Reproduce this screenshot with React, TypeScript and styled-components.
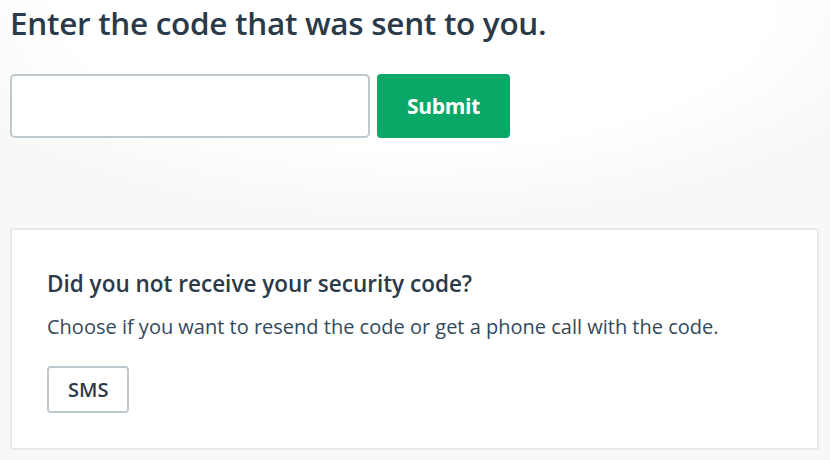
import * as React from "react";
import styled, { createGlobalStyle } from "styled-components";

const GlobalStyle = createGlobalStyle`
  html, body {
    margin: 0;
    padding: 0;
  }
  body {
    font-family: "Open Sans", "Noto Sans", "Liberation Sans", sans-serif;
    color: #2b3a48;
  }
`;

const Page = styled.div`
  min-height: 460px;
  padding: 3px 11px 10px 10px;
  box-sizing: border-box;
  background:
    radial-gradient(ellipse 62% 215px at 50% 0, #ffffff 68%, #f8f8f8 100%),
    #f8f8f8;
`;

const Title = styled.h1`
  margin: 0;
  font-size: 31.5px;
  font-weight: 600;
  letter-spacing: -0.3px;
  line-height: 40px;
`;

const CodeForm = styled.form`
  display: flex;
  gap: 7px;
  margin-top: 31px;
`;

const CodeInput = styled.input`
  width: 360px;
  height: 64px;
  box-sizing: border-box;
  border: 2px solid #bfc8cd;
  border-radius: 5px;
  background: #fff;
  font-size: 20px;
  padding: 0 14px;
  font-family: inherit;
  outline: none;
`;

const SubmitButton = styled.button`
  width: 133px;
  height: 64px;
  border: none;
  border-radius: 4px;
  background: #0aa866;
  color: #fff;
  font-family: inherit;
  font-size: 21px;
  font-weight: 700;
  letter-spacing: -0.3px;
  cursor: pointer;
`;

const HelpCard = styled.section`
  margin-top: 90px;
  background: #fff;
  border: 2px solid #e9e9e9;
  border-radius: 3px;
  padding: 39px 35px 35px;
`;

const CardTitle = styled.h2`
  margin: 0;
  font-size: 22.5px;
  font-weight: 600;
  line-height: 30px;
`;

const CardText = styled.p`
  margin: 14px 0 0;
  font-size: 20px;
  line-height: 28px;
  color: #34495a;
`;

const OptionRow = styled.div`
  display: flex;
  gap: 10px;
  margin-top: 25px;
`;

const OptionButton = styled.button`
  height: 47px;
  padding: 0 19px;
  border: 2px solid #bfc8cd;
  border-radius: 4px;
  background: #fff;
  color: #2b3a48;
  font-family: inherit;
  font-size: 20px;
  font-weight: 600;
  cursor: pointer;
`;

export default function App() {
  const [code, setCode] = React.useState("");

  return (
    <Page>
      <GlobalStyle />
      <Title>Enter the code that was sent to you.</Title>
      <CodeForm onSubmit={e => e.preventDefault()}>
        <CodeInput value={code} onChange={e => setCode(e.target.value)} />
        <SubmitButton type="submit">Submit</SubmitButton>
      </CodeForm>
      <HelpCard>
        <CardTitle>Did you not receive your security code?</CardTitle>
        <CardText>Choose if you want to resend the code or get a phone call with the code.</CardText>
        <OptionRow>
          <OptionButton type="button">SMS</OptionButton>
        </OptionRow>
      </HelpCard>
    </Page>
  );
}
